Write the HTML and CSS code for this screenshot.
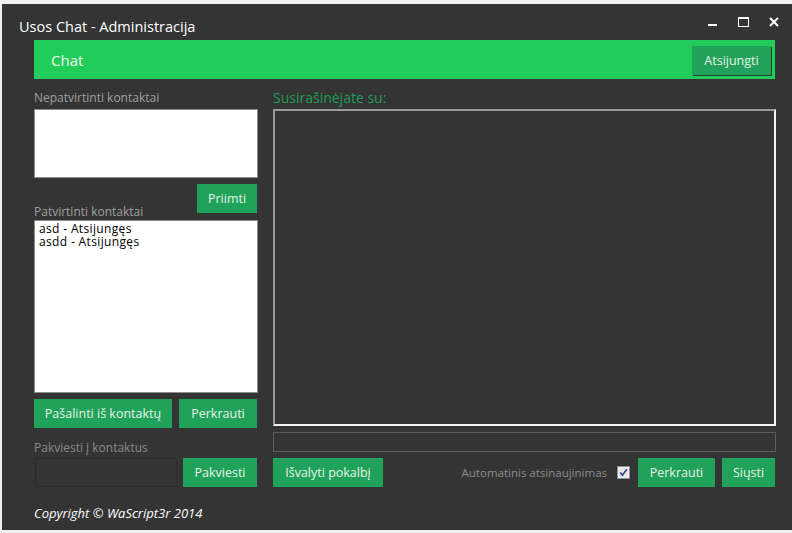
FILE: index.html
```html
<!DOCTYPE html>
<html lang="lt">
<head>
<meta charset="utf-8">
<title>Usos Chat - Administracija</title>
<link rel="stylesheet" href="styles.css">
</head>
<body>
<div class="window">
  <div class="titlebar">
    <span class="title">Usos Chat - Administracija</span>
    <div class="controls">
      <svg class="ctl" width="10" height="10" viewBox="0 0 10 10"><rect x="0" y="7" width="9" height="2" fill="#fff"/></svg>
      <svg class="ctl" width="11" height="10" viewBox="0 0 11 10"><rect x="0.5" y="0.5" width="10" height="9" fill="none" stroke="#fff"/><rect x="0" y="0" width="11" height="2" fill="#fff"/></svg>
      <svg class="ctl" width="10" height="10" viewBox="0 0 10 10"><path d="M1 1 L9 9 M9 1 L1 9" stroke="#fff" stroke-width="2"/></svg>
    </div>
  </div>
  <div class="main">
    <div class="header">
      <span class="brand">Chat</span>
      <button class="btn btn-logout">Atsijungti</button>
    </div>
    <div class="content">
      <div class="left">
        <div class="label">Nepatvirtinti kontaktai</div>
        <div class="listbox listbox-pending"></div>
        <div class="row row-accept">
          <div class="label label-bottom">Patvirtinti kontaktai</div>
          <button class="btn btn-accept">Priimti</button>
        </div>
        <div class="listbox listbox-contacts">
          <div class="item">asd - Atsijungęs</div>
          <div class="item">asdd - Atsijungęs</div>
        </div>
        <div class="row row-actions">
          <button class="btn btn-remove">Pašalinti iš kontaktų</button>
          <button class="btn btn-reload-left">Perkrauti</button>
        </div>
        <div class="label label-invite">Pakviesti į kontaktus</div>
        <div class="row row-invite">
          <div class="invite-input"></div>
          <button class="btn btn-invite">Pakviesti</button>
        </div>
      </div>
      <div class="right">
        <div class="label label-green">Susirašinėjate su:</div>
        <div class="chatbox"></div>
        <div class="msg-input"></div>
        <div class="row row-bottom">
          <button class="btn btn-clear">Išvalyti pokalbį</button>
          <span class="auto-label">Automatinis atsinaujinimas</span>
          <svg class="checkbox" width="13" height="13" viewBox="0 0 13 13">
            <rect x="0.5" y="0.5" width="12" height="12" fill="#f2f2f2" stroke="#8f8f8f"/>
            <rect x="2" y="2" width="9" height="9" fill="#e4e4ea"/>
            <path d="M3.2 6.4 L5.4 9.2 L9.8 3.2" fill="none" stroke="#2b3f8f" stroke-width="1.6"/>
          </svg>
          <button class="btn btn-reload-right">Perkrauti</button>
          <button class="btn btn-send">Siųsti</button>
        </div>
      </div>
    </div>
    <div class="copyright">Copyright © WaScript3r 2014</div>
  </div>
</div>
</body>
</html>
```

FILE: styles.css
```css
html, body {
  margin: 0;
  padding: 0;
}
body {
  background: #f0f0f0;
  font-family: "Open Sans", "Noto Sans", sans-serif;
  overflow: hidden;
}
.window {
  margin: 4px 0 0 2px;
  width: 790px;
  height: 526px;
  background: #343434;
  box-sizing: border-box;
}
.titlebar {
  height: 36px;
  display: flex;
  align-items: center;
  padding: 8px 0 0 17px;
  box-sizing: border-box;
}
.title {
  color: #ffffff;
  font-size: 14.5px;
  flex: 1;
}
.controls {
  display: flex;
  align-items: center;
  gap: 20px;
  margin-right: 13px;
  margin-top: -8px;
}
.ctl { display: block; }

.main {
  padding-left: 32px;
}
.header {
  width: 741px;
  height: 39px;
  background: #22cc5a;
  display: flex;
  align-items: center;
  justify-content: space-between;
  box-sizing: border-box;
  padding: 0 4px 0 17px;
}
.brand {
  color: #eef8ea;
  font-size: 15px;
}
.btn {
  border: none;
  margin: 0;
  padding: 0;
  background: #21a25a;
  color: #e6f4e6;
  font-family: "Open Sans", "Noto Sans", sans-serif;
  font-size: 12.5px;
  height: 29px;
  cursor: pointer;
}
.btn-logout {
  width: 79px;
  height: 29px;
  margin-top: 1px;
  box-shadow: 1px 1px 0 #2d3a32;
}

.content {
  display: flex;
  gap: 15px;
  margin-top: 10px;
}
.left {
  width: 224px;
  display: flex;
  flex-direction: column;
}
.right {
  width: 503px;
  display: flex;
  flex-direction: column;
}
.label {
  color: #a0a0a0;
  font-size: 12px;
  line-height: 18px;
  margin-bottom: 2px;
}
.label-green {
  color: #1f9d55;
  font-size: 14px;
}
.listbox {
  background: #ffffff;
  border: 1px solid #8c8c8c;
  box-sizing: border-box;
}
.listbox-pending {
  height: 69px;
}
.row {
  display: flex;
}
.row-accept {
  height: 36px;
  margin-top: 6px;
  justify-content: space-between;
  align-items: flex-start;
}
.label-bottom {
  align-self: flex-end;
  margin-bottom: 0;
  line-height: 16px;
}
.btn-accept {
  width: 60px;
  margin-right: 1px;
}
.listbox-contacts {
  height: 173px;
  padding: 1px 4px;
}
.item {
  color: #000;
  font-size: 12px;
  letter-spacing: 0.35px;
  line-height: 13px;
}
.row-actions {
  margin-top: 6px;
  gap: 7px;
}
.btn-remove { width: 138px; }
.btn-reload-left { width: 78px; }
.label-invite {
  color: #8a8a8a;
  margin: 11px 0 1px;
}
.row-invite {
  gap: 6px;
  padding-left: 1px;
}
.invite-input {
  width: 142px;
  height: 29px;
  border: 1px solid #2a2a2a;
  box-sizing: border-box;
}
.btn-invite { width: 74px; }

.chatbox {
  height: 317px;
  border: 2px solid;
  border-color: #9a9a9a #f2f2f2 #f2f2f2 #9a9a9a;
  box-sizing: border-box;
}
.msg-input {
  height: 20px;
  margin-top: 6px;
  border: 1px solid #5c5c5c;
  box-sizing: border-box;
}
.row-bottom {
  margin-top: 6px;
  align-items: center;
}
.btn-clear { width: 110px; }
.auto-label {
  margin-left: auto;
  color: #8c8c8c;
  font-size: 11.5px;
}
.checkbox {
  display: block;
  margin-left: 10px;
}
.btn-reload-right {
  width: 77px;
  margin-left: 8px;
}
.btn-send {
  width: 53px;
  margin-left: 7px;
  margin-right: 1px;
}
.copyright {
  margin-top: 17px;
  color: #ffffff;
  font-style: italic;
  font-size: 13px;
  line-height: 18px;
}
```
